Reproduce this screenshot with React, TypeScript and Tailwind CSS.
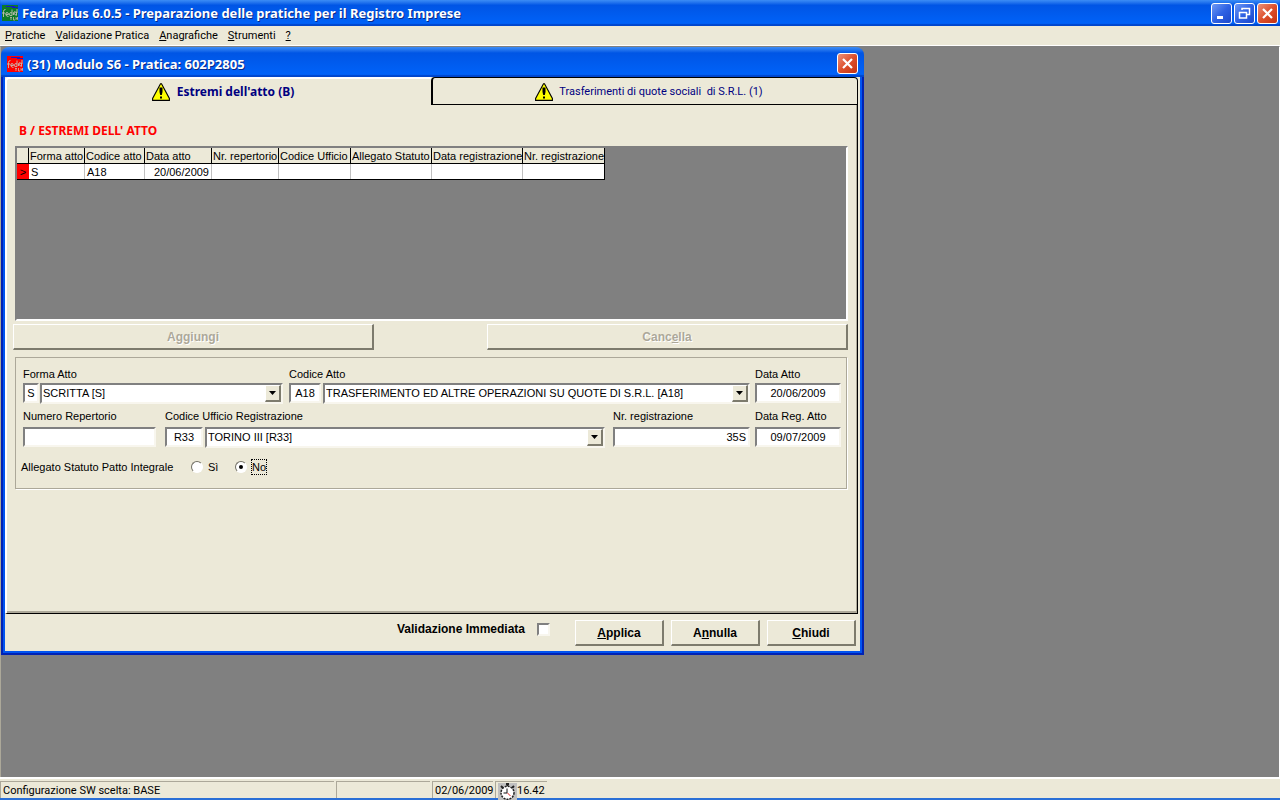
import type { InputHTMLAttributes, ReactNode } from "react";

const sunken =
  "border-2 border-t-[#808080] border-l-[#808080] border-r-[#f8f6ee] border-b-[#f8f6ee] bg-white text-black";
const raised =
  "border-t border-l border-r-2 border-b-2 border-t-white border-l-white border-r-[#7d7b6d] border-b-[#7d7b6d] bg-[#ece9d8]";
const titleBar =
  "bg-linear-to-b from-[#3c8df5] via-[#0055e5] via-20% to-[#0064fb] shadow-[inset_0_-2px_1px_#0046cc]";
const titleText =
  "flex-1 font-['Noto_Sans',sans-serif] text-[13px] leading-5 font-bold text-white [text-shadow:1px_1px_0_#0a2a86]";

const columns = [
  { title: "Forma atto", width: "w-[56px]", value: "S" },
  { title: "Codice atto", width: "w-[60px]", value: "A18" },
  { title: "Data atto", width: "w-[67px]", value: "20/06/2009" },
  { title: "Nr. repertorio", width: "w-[67px]", value: "" },
  { title: "Codice Ufficio", width: "w-[72px]", value: "" },
  { title: "Allegato Statuto", width: "w-[81px]", value: "" },
  { title: "Data registrazione", width: "w-[91px]", value: "" },
  { title: "Nr. registrazione", width: "w-[81px]", value: "" },
];

function AppIcon({ color }: { color: string }) {
  return (
    <svg width="16" height="16" viewBox="0 0 16 16" className="shrink-0" fill="none">
      <rect width="16" height="16" fill={color} />
      <path d="M4 1.5h9M10 2.5h6" stroke="#1518c8" />
      <path
        d="M1.500 12V6.500q0-2 2-2M0 8h3M4 9.500h2.500q0-2-1.500-2T3.800 9.500t2.700 2M10 4.500v6M10 8q-2-1.500-2.500 1t2.500 1.500M11.500 10V7.500l1.500-1M14.500 10.500V7q-2-.5-2 1.500t2 1.500M15 4v4"
        stroke="#c4beb4"
        strokeWidth="0.9"
      />
      <path d="M8 12.500h2M9 12.500V15M11.500 12v3h1.500M14 15v-2.500l1.500 2V12" stroke="#c9b8b4" strokeWidth="0.800" />
    </svg>
  );
}

function WarningIcon() {
  return (
    <svg width="18" height="18" viewBox="0 0 18 18" className="shrink-0">
      <path d="M8.500.8h1l7.900 14.700v1.900H.6v-1.900z" fill="#ffff00" stroke="#000" strokeWidth="1.100" />
      <path d="M7.500 4.500h3V9l-.7 3H8.200l-.7-3z" fill="#000" />
      <rect x="8" y="13.500" width="2" height="2" fill="#000" />
    </svg>
  );
}

function ClockIcon() {
  return (
    <svg width="19" height="17" viewBox="0 0 19 17" className="shrink-0">
      <rect width="19" height="17" fill="#c0c0c0" />
      <path d="M8 1h3M9.500 1v2M3 3l2 2M16 3l-2 2" stroke="#222" strokeWidth="2" />
      <circle cx="9.500" cy="9.800" r="6.500" fill="#fff" stroke="#222" strokeWidth="1.500" strokeDasharray="2 1" />
      <path d="M9 5.500V10H5.500" stroke="#111" fill="none" />
      <path d="m9.500 10 3 3" stroke="#e02020" />
    </svg>
  );
}

function CaptionButton({ label, red, children }: { label: string; red?: boolean; children: ReactNode }) {
  return (
    <button
      type="button"
      aria-label={label}
      className={`flex size-[21px] items-center justify-center rounded-[3px] border border-white bg-linear-to-br ${
        red ? "from-[#eb9078] via-[#dd4f2b] to-[#c43210]" : "from-[#6f98f4] via-[#2f62e4] to-[#1c47cb]"
      }`}
    >
      <svg width="15" height="15" viewBox="0 0 15 15" fill="none" stroke="#fff">
        {children}
      </svg>
    </button>
  );
}

function CloseGlyph() {
  return <path d="m3 3 9 9M12 3l-9 9" strokeWidth="2.200" />;
}

function TextBox({ className, ...rest }: InputHTMLAttributes<HTMLInputElement>) {
  return <input type="text" className={`h-5 min-w-0 px-[2px] text-[11px] outline-none ${sunken} ${className}`} {...rest} />;
}

function Combo({ label, value, className }: { label: string; value: string; className: string }) {
  return (
    <div className={`relative ${className}`}>
      <select
        aria-label={label}
        defaultValue={value}
        className={`block h-[21px] w-full appearance-none pl-px text-[11px] outline-none ${sunken}`}
      >
        <option>{value}</option>
      </select>
      <span className={`pointer-events-none absolute top-[2px] right-[2px] flex h-[17px] w-4 items-center justify-center ${raised}`}>
        <svg width="7" height="4" viewBox="0 0 7 4">
          <path d="M0 0h7L3.500 4z" />
        </svg>
      </span>
    </div>
  );
}

function PushButton({ children, className, disabled }: { children: ReactNode; className: string; disabled?: boolean }) {
  return (
    <button
      type="button"
      disabled={disabled}
      className={`h-[26px] text-[12px] font-bold ${raised} ${className} ${
        disabled ? "text-[#aca899] [text-shadow:1px_1px_0_#fff]" : "text-black"
      }`}
    >
      {children}
    </button>
  );
}

function MainTitleBar() {
  return (
    <header className={`flex h-[26px] items-center gap-1 px-[2px] ${titleBar}`}>
      <AppIcon color="#0c7a28" />
      <h1 className={titleText}>Fedra Plus 6.0.5 - Preparazione delle pratiche per il Registro Imprese</h1>
      <div className="flex gap-[2px]">
        <CaptionButton label="Riduci a icona">
          <path d="M3 11.500h6" strokeWidth="3" />
        </CaptionButton>
        <CaptionButton label="Ripristina">
          <path d="M5 4V2.500h7.500v6H10M5 2.500h7.500" strokeWidth="1.500" />
          <path d="M2.500 6.500h7v5.500h-7z" strokeWidth="1.500" />
        </CaptionButton>
        <CaptionButton label="Chiudi applicazione" red>
          <CloseGlyph />
        </CaptionButton>
      </div>
    </header>
  );
}

function MenuBar() {
  return (
    <nav className="flex h-5 items-center gap-[10px] border-b border-white px-[5px] pt-[2px] font-[Roboto,sans-serif] text-[11px]">
      <a href="#pratiche"><u>P</u>ratiche</a>
      <a href="#validazione"><u>V</u>alidazione Pratica</a>
      <a href="#anagrafiche"><u>A</u>nagrafiche</a>
      <a href="#strumenti"><u>S</u>trumenti</a>
      <a href="#help"><u>?</u></a>
    </nav>
  );
}

function DeedGrid() {
  return (
    <div className="h-[175px] border-2 border-t-[#808080] border-l-[#808080] border-r-white border-b-white bg-[#808080]">
      <table className="w-[588px] table-fixed border-separate border-spacing-0 border-r border-b border-black bg-white text-[11px] leading-[14px]">
        <thead>
          <tr className="h-4 bg-[#ece9d8] text-left">
            <th className="w-3 border-r border-b border-black p-0" aria-label="Riga" />
            {columns.map((col, i) => (
              <th
                key={col.title}
                className={`${col.width} border-b border-black p-0 pl-px font-normal whitespace-nowrap ${
                  i < columns.length - 1 ? "border-r" : ""
                }`}
              >
                {col.title}
              </th>
            ))}
          </tr>
        </thead>
        <tbody>
          <tr className="h-[15px]">
            <td className="bg-[#ff0000] p-0 text-center">&gt;</td>
            {columns.map((col, i) => (
              <td
                key={col.title}
                className={`border-[#c0c0c0] p-0 px-[2px] ${i < columns.length - 1 ? "border-r" : ""} ${
                  col.title === "Data atto" ? "text-right" : ""
                }`}
              >
                {col.value}
              </td>
            ))}
          </tr>
        </tbody>
      </table>
    </div>
  );
}

function DeedForm() {
  return (
    <fieldset className="mt-[7px] mr-px h-[132px] border border-[#aca899] pt-2 pr-[5px] pl-[7px] text-[11px] shadow-[1px_1px_0_#fff]">
      <div className="flex">
        <div className="w-[266px]">
          <label htmlFor="forma" className="block h-[17px] leading-4">Forma Atto</label>
          <div className="flex gap-px">
            <TextBox id="forma" defaultValue="S" className="w-4 text-center" />
            <Combo label="Descrizione forma atto" value="SCRITTA [S]" className="w-[243px]" />
          </div>
        </div>
        <div className="flex-1">
          <label htmlFor="codice" className="block h-[17px] leading-4">Codice Atto</label>
          <div className="flex gap-[2px] pr-[5px]">
            <TextBox id="codice" defaultValue="A18" className="w-8 text-center" />
            <Combo
              label="Descrizione codice atto"
              value="TRASFERIMENTO ED ALTRE OPERAZIONI SU QUOTE DI S.R.L. [A18]"
              className="flex-1"
            />
          </div>
        </div>
        <div className="w-[86px]">
          <label htmlFor="data" className="block h-[17px] leading-4">Data Atto</label>
          <TextBox id="data" defaultValue="20/06/2009" className="w-full text-center" />
        </div>
      </div>
      <div className="mt-1 flex">
        <div className="w-[142px]">
          <label htmlFor="repertorio" className="block h-[19px] leading-4">Numero Repertorio</label>
          <TextBox id="repertorio" className="w-[133px]" />
        </div>
        <div className="flex-1">
          <label htmlFor="ufficio" className="block h-[19px] leading-4">Codice Ufficio Registrazione</label>
          <div className="flex gap-[2px] pr-2">
            <TextBox id="ufficio" defaultValue="R33" className="w-[38px] text-center" />
            <Combo label="Descrizione ufficio" value="TORINO III [R33]" className="flex-1" />
          </div>
        </div>
        <div className="w-[142px]">
          <label htmlFor="registrazione" className="block h-[19px] leading-4">Nr. registrazione</label>
          <TextBox id="registrazione" defaultValue="35S" className="w-[137px] text-right" />
        </div>
        <div className="w-[86px]">
          <label htmlFor="datareg" className="block h-[19px] leading-4">Data Reg. Atto</label>
          <TextBox id="datareg" defaultValue="09/07/2009" className="w-full text-center" />
        </div>
      </div>
      <div role="radiogroup" aria-labelledby="allegato" className="mt-[11px] -ml-[2px] flex items-center leading-4">
        <span id="allegato" className="w-[170px]">Allegato Statuto Patto Integrale</span>
        <label className="flex w-11 items-center gap-1">
          <Radio />
          <span className="px-px">Sì</span>
        </label>
        <label className="flex items-center gap-1">
          <Radio defaultChecked />
          <span className="border border-dotted border-black leading-[14px]">No</span>
        </label>
      </div>
    </fieldset>
  );
}

function Radio({ defaultChecked }: { defaultChecked?: boolean }) {
  return (
    <span className="relative flex size-3">
      <input
        type="radio"
        name="allegato"
        defaultChecked={defaultChecked}
        className="peer size-3 appearance-none rounded-full border border-t-[#716f64] border-r-white border-b-white border-l-[#716f64] bg-white"
      />
      <span className="pointer-events-none absolute top-1 left-1 hidden size-1 rounded-full bg-black peer-checked:block" />
    </span>
  );
}

function ModuleWindow() {
  return (
    <section className="w-full max-w-[863px]">
      <div className={`flex h-[30px] items-center gap-1 rounded-t-lg px-[6px] pt-[3px] ${titleBar}`}>
        <AppIcon color="#ff0000" />
        <h2 className={titleText}>(31) Modulo S6 - Pratica: 602P2805</h2>
        <CaptionButton label="Chiudi modulo" red>
          <CloseGlyph />
        </CaptionButton>
      </div>
      <div className="border-x-2 border-b-2 border-[#0022b4] bg-[#0054f0] px-[2px] pb-[2px]">
        <div className="bg-[#ece9d8] pr-[2px] text-black">
          <div role="tablist" className="flex h-7 font-['Noto_Sans',sans-serif] text-[#000080]">
            <button
              type="button"
              role="tab"
              aria-selected="true"
              className="flex flex-1 items-center justify-center gap-[7px] rounded-tl border-t-2 border-l-2 border-white pl-2 text-[12px] font-bold"
            >
              <WarningIcon />
              Estremi dell'atto (B)
            </button>
            <button
              type="button"
              role="tab"
              aria-selected="false"
              className="flex flex-1 items-center justify-center gap-[6px] rounded-t border-t border-r border-b border-l-2 border-black pt-[2px] pl-2 font-[Roboto,sans-serif] text-[11px] whitespace-pre"
            >
              <WarningIcon />
              {"Trasferimenti di quote sociali  di S.R.L. (1)"}
            </button>
          </div>
          <div className="h-[509px] border-r border-b border-l-2 border-r-black border-b-black border-l-white pt-[18px] pr-[9px] pl-2 shadow-[inset_-1px_-2px_0_#aca899]">
            <h3 className="pl-1 font-['Noto_Sans',sans-serif] text-[12px] leading-4 font-bold text-[#ff0000]">
              B / ESTREMI DELL' ATTO
            </h3>
            <div className="mt-[7px]">
              <DeedGrid />
            </div>
            <div className="-ml-[2px] mt-[3px] flex justify-between">
              <PushButton disabled className="w-[361px]">A<u>g</u>giungi</PushButton>
              <PushButton disabled className="w-[361px]">Canc<u>e</u>lla</PushButton>
            </div>
            <DeedForm />
          </div>
          <div className="flex h-[37px] items-center justify-end gap-[7px] pt-px pr-[2px]">
            <label className="mr-[18px] flex items-center gap-3 pb-2 text-[12px] font-bold">
              Validazione Immediata
              <input type="checkbox" className={`size-[13px] appearance-none ${sunken}`} />
            </label>
            <PushButton className="w-[89px]"><u>A</u>pplica</PushButton>
            <PushButton className="w-[89px]">A<u>n</u>nulla</PushButton>
            <PushButton className="w-[89px]"><u>C</u>hiudi</PushButton>
          </div>
        </div>
      </div>
    </section>
  );
}

function StatusBar() {
  const cell = "flex h-[17px] items-center border-t border-l border-[#aca899] px-[2px] pt-[2px]";
  return (
    <footer className="flex gap-[2px] border-t-2 border-b-2 border-t-white border-b-[#2a6fd6] pt-[2px] font-[Roboto,sans-serif] text-[11px]">
      <span className={`w-[334px] ${cell}`}>Configurazione SW scelta: BASE</span>
      <span className={`w-[94px] ${cell}`} />
      <span className={`w-[61px] ${cell}`}>02/06/2009</span>
      <span className={cell}>
        <ClockIcon />
        16.42
      </span>
    </footer>
  );
}

export default function App() {
  return (
    <div className="flex min-h-screen flex-col bg-[#ece9d8] font-['Liberation_Sans',Arial,sans-serif] text-black">
      <MainTitleBar />
      <MenuBar />
      <main className="flex-1 border-t border-r border-l border-t-[#808080] border-r-white border-l-[#aca899] bg-[#808080]">
        <ModuleWindow />
      </main>
      <StatusBar />
    </div>
  );
}
